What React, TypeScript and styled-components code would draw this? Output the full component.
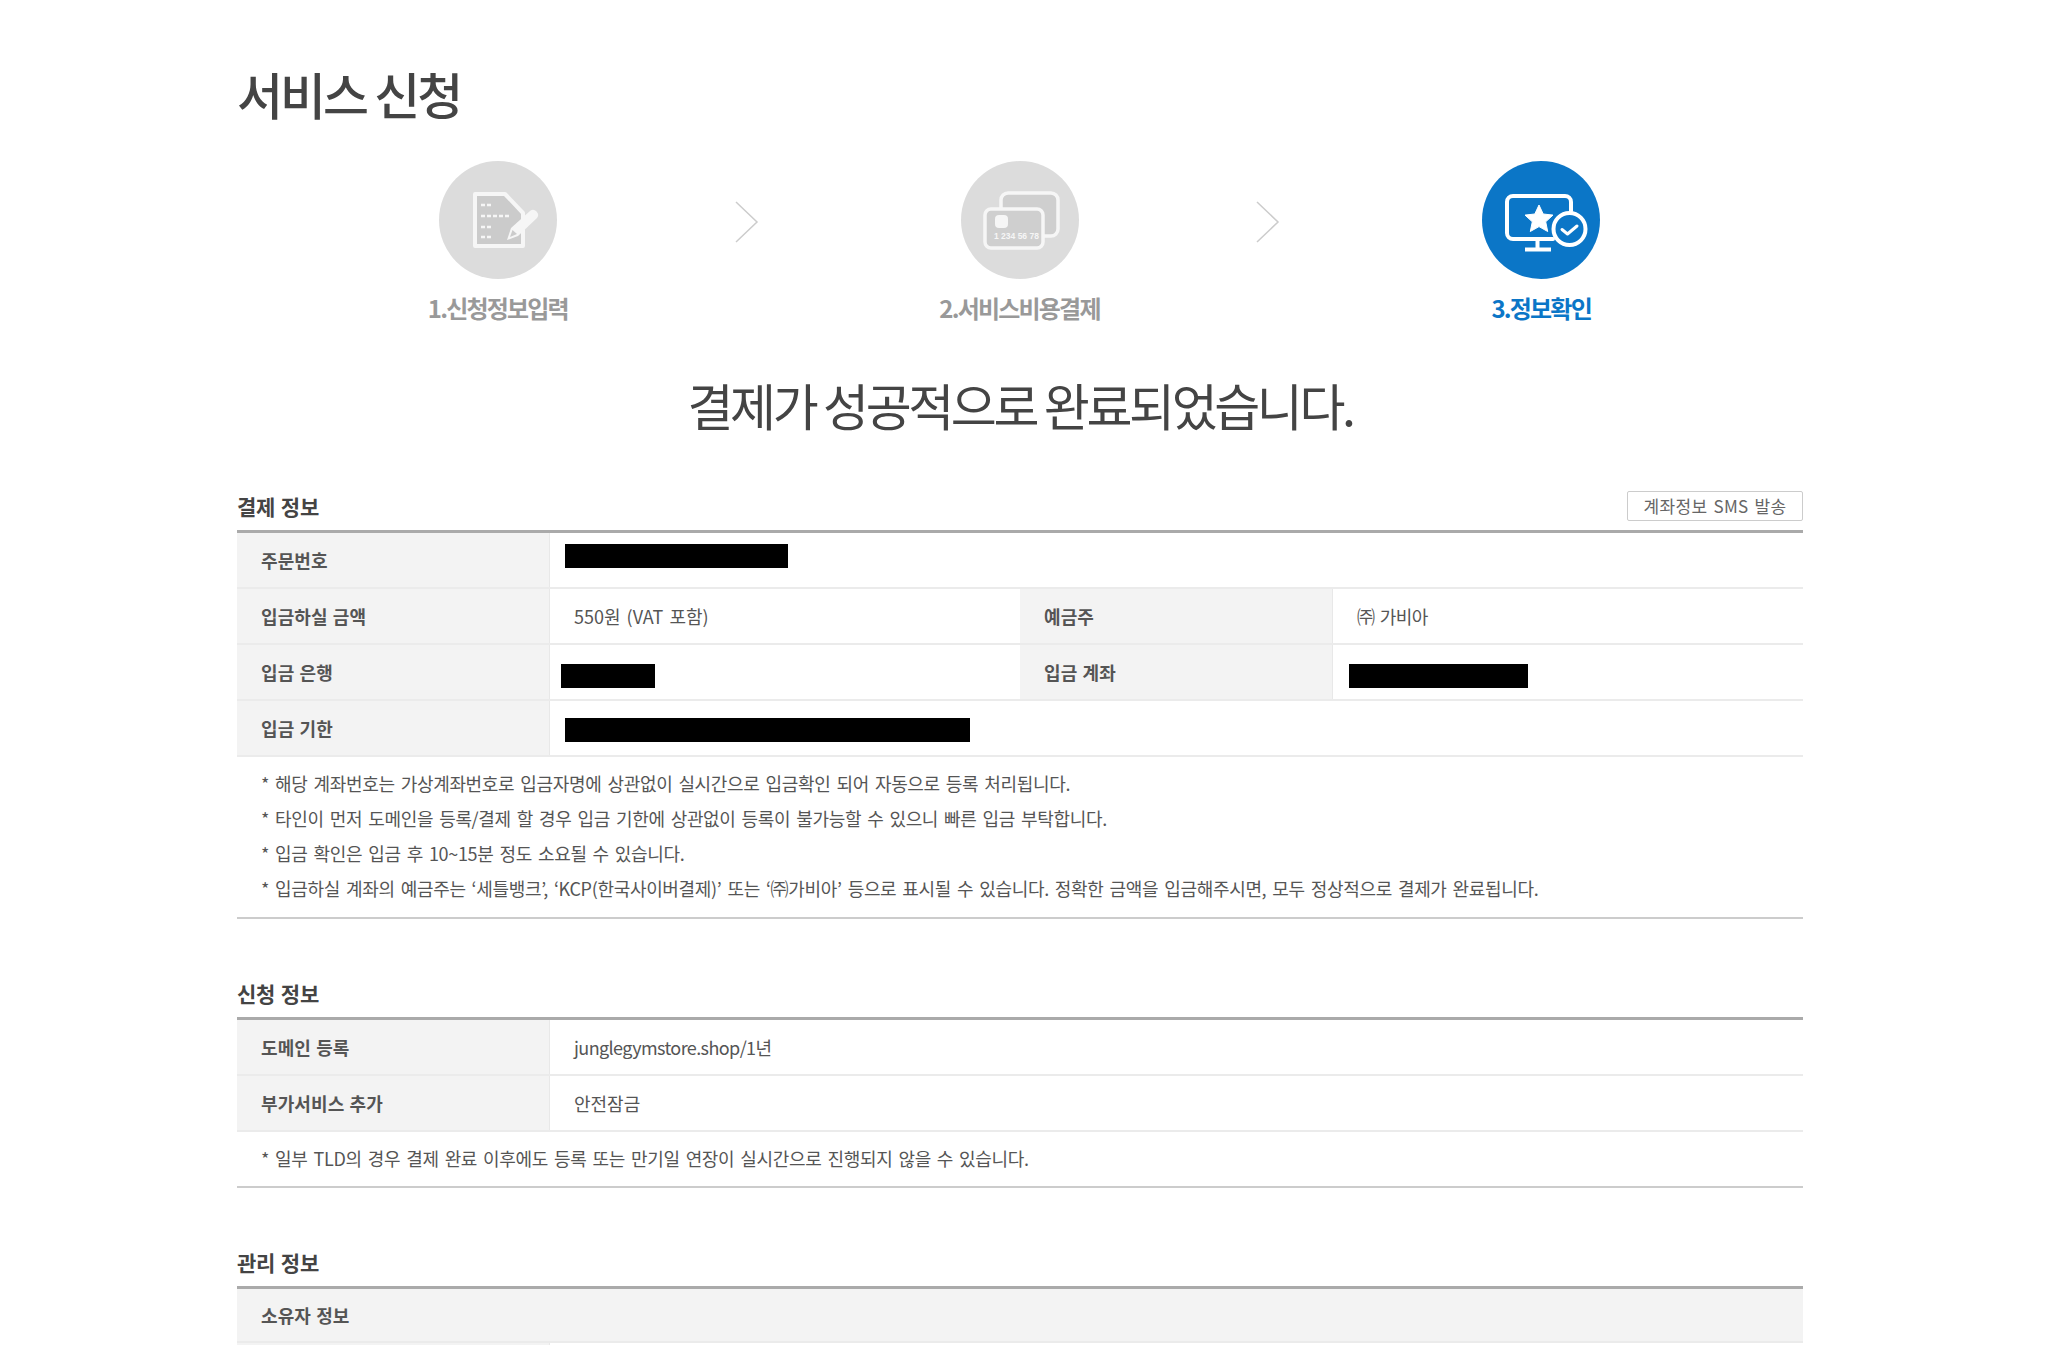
import React from "react"
import styled, { createGlobalStyle } from "styled-components"

const GlobalStyle = createGlobalStyle`
  html, body {
    margin: 0;
    padding: 0;
    background: #fff;
    overflow: hidden;
  }
  * {
    box-sizing: border-box;
  }
`

const Page = styled.div`
  width: 2048px;
  height: 1345px;
  overflow: hidden;
  padding: 63px 0 0 237px;
  font-family: "Noto Sans CJK KR", "Noto Sans", sans-serif;
  color: #555;
`

const Content = styled.div`
  width: 1566px;
`

const PageTitle = styled.h1`
  margin: 0;
  font-size: 50px;
  line-height: 60px;
  font-weight: 500;
  letter-spacing: -3px;
  color: #444;
`

const Steps = styled.div`
  display: flex;
  margin: 38px 1px 0 0;
`

const Step = styled.div`
  flex: 1 1 0;
  display: flex;
  flex-direction: column;
  align-items: center;
`

const StepCircle = styled.div<{ $active?: boolean }>`
  width: 118px;
  height: 118px;
  border-radius: 50%;
  background: ${(p) => (p.$active ? "#0b76c7" : "#dcdcdc")};
`

const StepLabel = styled.div<{ $active?: boolean }>`
  margin-top: 14px;
  font-size: 24px;
  line-height: 30px;
  font-weight: 700;
  letter-spacing: -1.8px;
  color: ${(p) => (p.$active ? "#0b76c7" : "#999")};
`

const StepArrow = styled.svg`
  flex: none;
  width: 24px;
  height: 42px;
  margin: 40px 0 0 -24px;
`

const Headline = styled.div`
  margin-top: 51px;
  text-align: center;
  font-size: 50px;
  line-height: 60px;
  font-weight: 400;
  letter-spacing: -3.4px;
  color: #444;
`

const Section = styled.section<{ $gap: number }>`
  margin-top: ${(p) => p.$gap}px;
`

const SectionHeader = styled.div`
  display: flex;
  justify-content: space-between;
  height: 39px;
  align-items: flex-start;
`

const SectionTitle = styled.h2`
  margin: 1px 0 0;
  font-size: 21px;
  line-height: 28px;
  font-weight: 700;
  letter-spacing: -0.2px;
  word-spacing: 1px;
  color: #444;
`

const SmsButton = styled.button`
  width: 176px;
  height: 30px;
  padding: 0;
  border: 1px solid #ccc;
  border-radius: 2px;
  background: #fff;
  font-family: inherit;
  font-size: 17px;
  line-height: 26px;
  letter-spacing: 0.3px;
  word-spacing: 2px;
  color: #666;
`

const Table = styled.div`
  border-top: 3px solid #aaa;
`

const Row = styled.div<{ $height?: number }>`
  display: grid;
  grid-template-columns: 312px 471px 312px 471px;
  height: ${(p) => p.$height ?? 56}px;
  border-bottom: 2px solid #ebebeb;
`

const Label = styled.div`
  display: flex;
  align-items: center;
  padding-left: 24px;
  background: #f3f3f3;
  font-size: 18px;
  font-weight: 700;
  letter-spacing: 0.1px;
  word-spacing: 1px;
  color: #555;
`

const Value = styled.div<{ $span?: boolean; $tight?: boolean }>`
  display: flex;
  align-items: center;
  padding-left: 24px;
  border-left: 1px solid #e8e8e8;
  font-size: 18px;
  letter-spacing: ${(p) => (p.$tight ? "-0.6px" : "0")};
  word-spacing: 2px;
  color: #555;
  white-space: pre;
  grid-column: ${(p) => (p.$span ? "span 3" : "auto")};
`

const FullLabel = styled(Label)`
  grid-column: 1 / -1;
`

const Redacted = styled.div<{ $left: number; $width: number; $shift: number }>`
  width: ${(p) => p.$width}px;
  height: 24px;
  margin-left: ${(p) => p.$left}px;
  margin-top: ${(p) => p.$shift}px;
  background: #000;
`

const Notes = styled.div<{ $bottom: number }>`
  padding: 9px 0 ${(p) => p.$bottom}px 24px;
  border-bottom: 2px solid #ccc;
`

const Note = styled.p`
  margin: 0;
  font-size: 18px;
  line-height: 35px;
  letter-spacing: -0.33px;
  word-spacing: 2.3px;
  color: #555;
`

const DocIcon = () => (
  <svg width="118" height="118" viewBox="0 0 118 118">
    <path d="M36 33H66L84 52V85H36Z" fill="#cbcbcb" stroke="#f6f6f6" strokeWidth="4" strokeLinejoin="round" />
    <path d="M42 44h10M42 55h28M42 66h10M42 76h10" stroke="#f6f6f6" strokeWidth="2.5" strokeDasharray="4 2" />
    <path d="M68 79l4-12 19-17a5 5 0 0 1 7 7L79 75z" fill="#f6f6f6" />
    <path d="M71 76l2.5-7 4.5 4z" fill="#cbcbcb" />
  </svg>
)

const CardIcon = () => (
  <svg width="118" height="118" viewBox="0 0 118 118">
    <rect x="40" y="32" width="57" height="43" rx="7" fill="#cfcfcf" stroke="#f6f6f6" strokeWidth="3.5" />
    <rect x="24" y="48" width="58" height="39" rx="6" fill="#cfcfcf" stroke="#f6f6f6" strokeWidth="3.5" />
    <rect x="34" y="54" width="13" height="13" rx="4" fill="#f6f6f6" />
    <text x="33" y="78" fontSize="8.5" fontWeight="700" fill="#f6f6f6" fontFamily="Liberation Sans, sans-serif">1 234 56 78</text>
  </svg>
)

const MonitorIcon = () => (
  <svg width="118" height="118" viewBox="0 0 118 118">
    <path d="M89 50V41a6 6 0 0 0-6-6H31a6 6 0 0 0-6 6V72a6 6 0 0 0 6 6H71" fill="none" stroke="#fff" strokeWidth="4" strokeLinecap="round" />
    <path d="M55.5 79V88M43 88.5H69" fill="none" stroke="#fff" strokeWidth="4" />
    <path d="M57 44l4.2 9 9.8 1.1-7.3 6.7 2 9.7L57 65.6l-8.7 4.9 2-9.7-7.3-6.7 9.8-1.1z" fill="#fff" stroke="#fff" strokeWidth="1" strokeLinejoin="round" />
    <circle cx="87.5" cy="68" r="16" fill="#0b76c7" stroke="#fff" strokeWidth="4" />
    <path d="M80 68.5l5.5 4.5 9.5-8" fill="none" stroke="#fff" strokeWidth="3" strokeLinecap="round" strokeLinejoin="round" />
  </svg>
)

const Chevron = () => (
  <StepArrow viewBox="0 0 24 42">
    <path d="M1 1L22 21L1 41" fill="none" stroke="#ccc" strokeWidth="1.5" />
  </StepArrow>
)

function App() {
  return (
    <Page>
      <GlobalStyle />
      <Content>
        <PageTitle>서비스 신청</PageTitle>

        <Steps>
          <Step>
            <StepCircle><DocIcon /></StepCircle>
            <StepLabel>1.신청정보입력</StepLabel>
          </Step>
          <Chevron />
          <Step>
            <StepCircle><CardIcon /></StepCircle>
            <StepLabel>2.서비스비용결제</StepLabel>
          </Step>
          <Chevron />
          <Step>
            <StepCircle $active><MonitorIcon /></StepCircle>
            <StepLabel $active>3.정보확인</StepLabel>
          </Step>
        </Steps>

        <Headline>결제가 성공적으로 완료되었습니다.</Headline>

        <Section $gap={57}>
          <SectionHeader>
            <SectionTitle>결제 정보</SectionTitle>
            <SmsButton>계좌정보 SMS 발송</SmsButton>
          </SectionHeader>
          <Table>
            <Row>
              <Label>주문번호</Label>
              <Value $span>
                <Redacted $left={-9} $width={223} $shift={-8} />
              </Value>
            </Row>
            <Row>
              <Label>입금하실 금액</Label>
              <Value>550원 (VAT 포함)</Value>
              <Label>예금주</Label>
              <Value $tight>㈜ 가비아</Value>
            </Row>
            <Row>
              <Label>입금 은행</Label>
              <Value>
                <Redacted $left={-13} $width={94} $shift={8} />
              </Value>
              <Label>입금 계좌</Label>
              <Value>
                <Redacted $left={-8} $width={179} $shift={8} />
              </Value>
            </Row>
            <Row>
              <Label>입금 기한</Label>
              <Value $span>
                <Redacted $left={-9} $width={405} $shift={4} />
              </Value>
            </Row>
          </Table>
          <Notes $bottom={11}>
            <Note>* 해당 계좌번호는 가상계좌번호로 입금자명에 상관없이 실시간으로 입금확인 되어 자동으로 등록 처리됩니다.</Note>
            <Note>* 타인이 먼저 도메인을 등록/결제 할 경우 입금 기한에 상관없이 등록이 불가능할 수 있으니 빠른 입금 부탁합니다.</Note>
            <Note>* 입금 확인은 입금 후 10~15분 정도 소요될 수 있습니다.</Note>
            <Note>* 입금하실 계좌의 예금주는 ‘세틀뱅크’, ‘KCP(한국사이버결제)’ 또는 ‘㈜가비아’ 등으로 표시될 수 있습니다. 정확한 금액을 입금해주시면, 모두 정상적으로 결제가 완료됩니다.</Note>
          </Notes>
        </Section>

        <Section $gap={59}>
          <SectionHeader>
            <SectionTitle>신청 정보</SectionTitle>
          </SectionHeader>
          <Table>
            <Row>
              <Label>도메인 등록</Label>
              <Value $span $tight>junglegymstore.shop/1년</Value>
            </Row>
            <Row>
              <Label>부가서비스 추가</Label>
              <Value $span>안전잠금</Value>
            </Row>
          </Table>
          <Notes $bottom={10}>
            <Note>* 일부 TLD의 경우 결제 완료 이후에도 등록 또는 만기일 연장이 실시간으로 진행되지 않을 수 있습니다.</Note>
          </Notes>
        </Section>

        <Section $gap={59}>
          <SectionHeader>
            <SectionTitle>관리 정보</SectionTitle>
          </SectionHeader>
          <Table>
            <Row $height={54}>
              <FullLabel>소유자 정보</FullLabel>
            </Row>
            <Row>
              <Label />
              <Value $span />
            </Row>
          </Table>
        </Section>
      </Content>
    </Page>
  )
}

export default App
